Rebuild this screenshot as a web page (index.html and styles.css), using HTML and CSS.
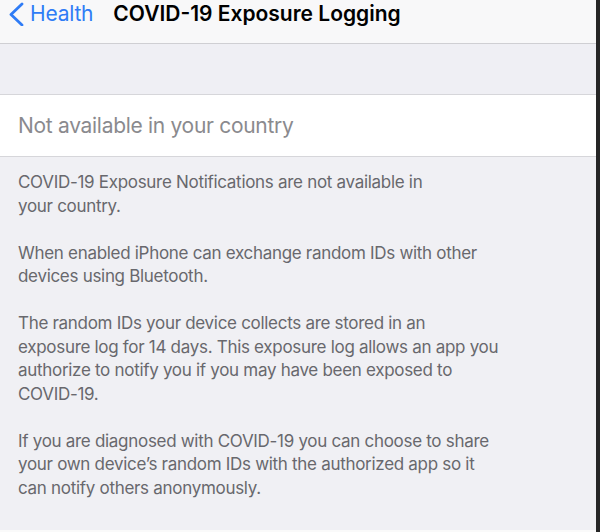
FILE: index.html
```html
<!DOCTYPE html>
<html>
<head>
<meta charset="utf-8">
<link rel="stylesheet" href="styles.css">
</head>
<body>
<div class="screen">
  <header class="nav">
    <a class="back">
      <svg class="chev" width="18" height="24" viewBox="0 0 18 24"><path d="M15 2 L4 12.5 L15 23" fill="none" stroke="#2f7cf6" stroke-width="2.8" stroke-linecap="round" stroke-linejoin="round"/></svg>
      <span class="back-label">Health</span>
    </a>
    <h1 class="title">COVID-19 Exposure Logging</h1>
  </header>
  <div class="band"></div>
  <div class="cell">Not available in your country</div>
  <div class="footer">
    <p><span>COVID-19 Exposure Notifications are not available in</span><span>your country.</span></p>
    <p><span>When enabled iPhone can exchange random IDs with other</span><span>devices using Bluetooth.</span></p>
    <p><span>The random IDs your device collects are stored in an</span><span>exposure log for 14 days. This exposure log allows an app you</span><span>authorize to notify you if you may have been exposed to</span><span>COVID-19.</span></p>
    <p><span>If you are diagnosed with COVID-19 you can choose to share</span><span>your own device’s random IDs with the authorized app so it</span><span>can notify others anonymously.</span></p>
  </div>
</div>
</body>
</html>
```
FILE: styles.css
```css
html, body {
  margin: 0;
  padding: 0;
  background: #2a2a2a;
}
body {
  font-family: Inter, "Liberation Sans", sans-serif;
}
.screen {
  width: 596px;
  height: 532px;
  border-right: 4px solid #262626;
  display: flex;
  flex-direction: column;
  background: #f0f0f4;
  overflow: hidden;
}
.nav {
  flex: none;
  background: #f8f8f9;
  border-bottom: 1px solid #cfcfd3;
  display: flex;
  align-items: center;
  box-sizing: border-box;
  padding-left: 7px;
  height: 44px;
  padding-bottom: 16px;
}
.back {
  display: flex;
  align-items: center;
  color: #2f7cf6;
}
.chev {
  display: block;
}
.back-label {
  font-size: 21px;
  margin-left: 5px;
  letter-spacing: -0.2px;
}
.title {
  margin: 0 0 0 20px;
  font-size: 21px;
  font-weight: 600;
  color: #000;
  letter-spacing: 0;
}
.band {
  height: 50px;
  flex: none;
  border-bottom: 1px solid #d6d6da;
  background: #efeff4;
}
.cell {
  height: 62px;
  flex: none;
  box-sizing: border-box;
  background: #fff;
  border-bottom: 1px solid #d6d6da;
  padding: 0 18px;
  display: flex;
  align-items: center;
  font-size: 21px;
  color: #8a8a8e;
  letter-spacing: -0.3px;
}
.footer {
  flex: 1;
  padding: 14px 18px 0;
  color: #68686d;
  font-size: 17px;
  line-height: 23.5px;
  letter-spacing: -0.3px;
  border-bottom: 2px solid #fafafa;
}
.footer p {
  margin: 0 0 23.5px;
}
.footer span {
  display: block;
  white-space: nowrap;
}
```
